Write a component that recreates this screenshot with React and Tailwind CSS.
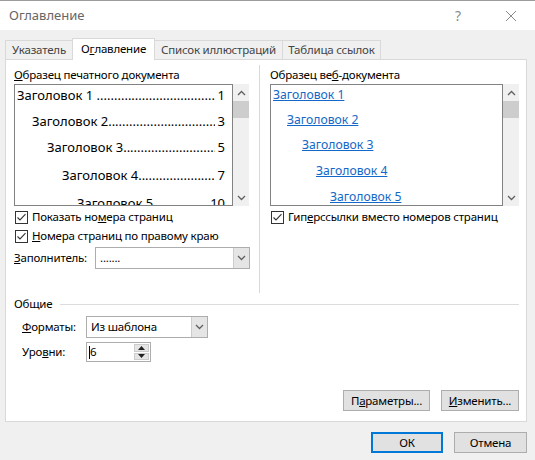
import React from "react";

const printRows = [
  { title: "Заголовок 1 ", page: "1", indent: 2, h: 26 },
  { title: "Заголовок 2", page: "3", indent: 17, h: 26 },
  { title: "Заголовок 3", page: "5", indent: 32, h: 26 },
  { title: "Заголовок 4", page: "7", indent: 47, h: 30 },
  { title: "Заголовок 5", page: "10", indent: 62, h: 26 },
];

const webRows = [
  { title: "Заголовок 1", indent: 2, h: 25 },
  { title: "Заголовок 2", indent: 16, h: 25 },
  { title: "Заголовок 3", indent: 31, h: 25 },
  { title: "Заголовок 4", indent: 45, h: 27 },
  { title: "Заголовок 5", indent: 59, h: 25 },
];

const DOTS = ".".repeat(80);

function Chevron({ up }) {
  return (
    <svg width="9" height="6" viewBox="0 0 9 6">
      <path
        d={up ? "M1 5 L4.5 1.5 L8 5" : "M1 1 L4.5 4.5 L8 1"}
        fill="none"
        stroke="#606060"
        strokeWidth="1.3"
      />
    </svg>
  );
}

function Scrollbar() {
  return (
    <div className="w-[16px] h-full bg-[#f0f0f0] flex flex-col items-center">
      <div className="h-[17px] flex items-center justify-center">
        <Chevron up />
      </div>
      <div className="w-full h-[17px] bg-[#cdcdcd]" />
      <div className="flex-1" />
      <div className="h-[17px] flex items-center justify-center">
        <Chevron />
      </div>
    </div>
  );
}

function CheckBox({ children }) {
  return (
    <div className="flex items-center h-[16px]">
      <svg width="13" height="13" viewBox="0 0 13 13" className="ml-[1px] shrink-0">
        <rect x="0.5" y="0.5" width="12" height="12" fill="white" stroke="#333" />
        <path d="M2.5 6.5 L5 9 L10.5 3.2" fill="none" stroke="#333" strokeWidth="1.1" />
      </svg>
      <span className="ml-[4px] whitespace-nowrap">{children}</span>
    </div>
  );
}

function DropButton() {
  return (
    <div className="w-[16px] h-full bg-[#e5e5e5] border-l border-[#cccccc] flex items-center justify-center">
      <Chevron />
    </div>
  );
}

function Button({ children, primary, className }) {
  return (
    <div
      className={
        "h-[21px] bg-[#e1e1e1] flex items-center justify-center " +
        (primary ? "border-2 border-[#0078d7] " : "border border-[#adadad] ") +
        className
      }
    >
      {children}
    </div>
  );
}

export default function App() {
  return (
    <div className="w-[535px] h-[460px] bg-[#f0f0f0] overflow-hidden font-['Noto_Sans','DejaVu_Sans',sans-serif] text-[11.5px] tracking-[-0.2px] text-black">
      {/* title bar */}
      <div className="h-[30px] bg-white flex items-center border-t border-[#9c9c9c]">
        <span className="ml-[9px] text-[13px] tracking-normal text-[#666666]">Оглавление</span>
        <span className="ml-auto text-[14px] text-[#8a8a8a]">?</span>
        <svg width="12" height="12" viewBox="0 0 12 12" className="ml-[44px] mr-[18px]">
          <path d="M1 1 L11 11 M11 1 L1 11" stroke="#8a8a8a" strokeWidth="1" />
        </svg>
      </div>

      {/* tabs */}
      <div className="h-[29px] flex items-end pl-[5px]">
        <div className="w-[67px] h-[19px] border-t border-l border-[#d9d9d9] flex items-center justify-center text-[#444]">
          Указатель
        </div>
        <div className="w-[83px] h-[22px] -mb-px bg-white border-t border-x border-[#d9d9d9] relative z-10 flex items-center justify-center pb-[2px]">
          О<span className="underline">г</span>лавление
        </div>
        <div className="w-[127px] h-[19px] border-t border-[#d9d9d9] flex items-center justify-center text-[#444]">
          Список иллюстраций
        </div>
        <div className="w-[99px] h-[19px] border-t border-x border-[#d9d9d9] flex items-center justify-center text-[#444]">
          Таблица ссылок
        </div>
      </div>

      {/* tab page */}
      <div className="ml-[5px] w-[522px] h-[363px] bg-white border border-[#d9d9d9] flex flex-col">
        <div className="flex pt-[5px] pl-[8px]">
          {/* left column */}
          <div className="w-[236px] pt-[2px] flex flex-col">
            <div className="h-[16px] leading-[16px]">
              <span className="underline">О</span>бразец печатного документа
            </div>
            <div className="mt-[1px] flex h-[122px]">
              <div className="w-[219px] h-full border border-[#828282] overflow-hidden pr-[7px]">
                <div className="-mt-[2px] text-[13px] tracking-normal">
                  {printRows.map((r) => (
                    <div
                      key={r.title}
                      className="flex items-center whitespace-nowrap"
                      style={{ paddingLeft: r.indent, height: r.h }}
                    >
                      <span className="whitespace-pre">{r.title}</span>
                      <span className="flex-1 min-w-0 overflow-hidden">{DOTS}</span>
                      <span className="pl-[3px]">{r.page}</span>
                    </div>
                  ))}
                </div>
              </div>
              <Scrollbar />
            </div>
            <div className="mt-[3px]">
              <CheckBox>
                Показать но<span className="underline">м</span>ера страниц
              </CheckBox>
            </div>
            <div className="mt-[3px]">
              <CheckBox>
                <span className="underline">Н</span>омера страниц по правому краю
              </CheckBox>
            </div>
            <div className="mt-[3px] flex items-center h-[22px]">
              <span className="w-[81px]">
                <span className="underline">З</span>аполнитель:
              </span>
              <div className="flex-1 h-full border border-[#adadad] flex items-center">
                <span className="pl-[4px] flex-1">.......</span>
                <DropButton />
              </div>
            </div>
          </div>

          {/* separator */}
          <div className="ml-[9px] w-px h-[228px] bg-[#d9d9d9]" />

          {/* right column */}
          <div className="ml-[10px] w-[250px] pt-[2px] flex flex-col">
            <div className="h-[16px] leading-[16px]">
              Образец ве<span className="underline">б</span>-документа
            </div>
            <div className="mt-[1px] flex h-[122px]">
              <div className="w-[233px] h-full border border-[#828282] overflow-hidden">
                <div className="-mt-[2px] text-[12.2px] tracking-normal">
                  {webRows.map((r) => (
                    <div
                      key={r.title}
                      className="flex items-center whitespace-nowrap"
                      style={{ paddingLeft: r.indent, height: r.h }}
                    >
                      <span className="underline text-[#1468c8]">{r.title}</span>
                    </div>
                  ))}
                </div>
              </div>
              <Scrollbar />
            </div>
            <div className="mt-[3px]">
              <CheckBox>
                Гип<span className="underline">е</span>рссылки вместо номеров страниц
              </CheckBox>
            </div>
          </div>
        </div>

        {/* general group */}
        <div className="mt-[3px] pl-[8px] pr-[7px] flex items-center h-[16px]">
          <span>Общие</span>
          <div className="ml-[8px] flex-1 h-px bg-[#dcdcdc]" />
        </div>
        <div className="mt-[4px] pl-[16px] flex items-center h-[22px]">
          <span className="w-[64px]">
            <span className="underline">Ф</span>орматы:
          </span>
          <div className="w-[122px] h-full border border-[#adadad] flex items-center">
            <span className="pl-[4px] flex-1">Из шаблона</span>
            <DropButton />
          </div>
        </div>
        <div className="mt-[4px] pl-[16px] flex items-center h-[20px]">
          <span className="w-[64px]">
            Уро<span className="underline">в</span>ни:
          </span>
          <div className="w-[65px] h-full border border-[#adadad] flex items-center">
            <span className="pl-[2px] flex-1 flex items-center">
              <span className="w-px h-[13px] bg-black" />
              <span>6</span>
            </span>
            <div className="w-[16px] h-full flex flex-col py-[1px] pr-[1px] gap-[1px]">
              <div className="flex-1 bg-[#e5e5e5] border border-[#cccccc] flex items-center justify-center">
                <svg width="7" height="4" viewBox="0 0 7 4">
                  <path d="M0 4 L3.5 0 L7 4 Z" fill="#222" />
                </svg>
              </div>
              <div className="flex-1 bg-[#e5e5e5] border border-[#cccccc] flex items-center justify-center">
                <svg width="7" height="4" viewBox="0 0 7 4">
                  <path d="M0 0 L3.5 4 L7 0 Z" fill="#222" />
                </svg>
              </div>
            </div>
          </div>
        </div>

        <div className="mt-[28px] pr-[7px] flex justify-end gap-[11px]">
          <Button className="w-[87px]">
            П<span className="underline">а</span>раметры...
          </Button>
          <Button className="w-[78px]">
            <span className="underline">И</span>зменить...
          </Button>
        </div>
      </div>

      {/* dialog buttons */}
      <div className="mt-[10px] pr-[8px] flex justify-end gap-[11px]">
        <Button primary className="w-[72px]">
          ОК
        </Button>
        <Button className="w-[73px]">Отмена</Button>
      </div>
    </div>
  );
}
